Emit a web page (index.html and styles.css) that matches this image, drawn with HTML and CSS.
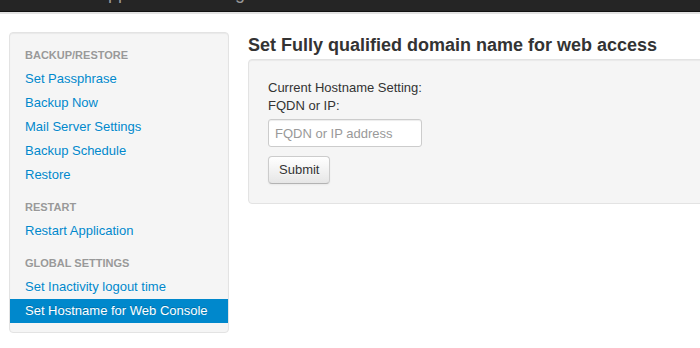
FILE: index.html
```html
<!DOCTYPE html>
<html lang="en">
<head>
<meta charset="UTF-8">
<title>Set Hostname for Web Console</title>
<link rel="stylesheet" href="styles.css">
</head>
<body>

<div class="navbar"><div class="brand">Application Settings</div></div>

<div class="page">
  <div class="sidebar">
    <ul class="nav-list">
      <li class="nav-header">Backup/Restore</li>
      <li><a href="#">Set Passphrase</a></li>
      <li><a href="#">Backup Now</a></li>
      <li><a href="#">Mail Server Settings</a></li>
      <li><a href="#">Backup Schedule</a></li>
      <li><a href="#">Restore</a></li>
      <li class="nav-header">Restart</li>
      <li><a href="#">Restart Application</a></li>
      <li class="nav-header">Global Settings</li>
      <li><a href="#">Set Inactivity logout time</a></li>
      <li class="active"><a href="#">Set Hostname for Web Console</a></li>
    </ul>
  </div>

  <div class="main">
    <h3>Set Fully qualified domain name for web access</h3>
    <div class="well">
      <form>
        <div class="label">Current Hostname Setting:</div>
        <label for="fqdn">FQDN or IP:</label>
        <input type="text" id="fqdn" placeholder="FQDN or IP address">
        <div><button type="submit" class="btn">Submit</button></div>
      </form>
    </div>
  </div>
</div>

</body>
</html>
```

FILE: styles.css
```css
html,body{margin:0;background:#fff;font-family:"Liberation Sans",Arial,sans-serif;font-size:13px;line-height:18px;color:#333;overflow:hidden}
.navbar{height:11px;background:#252525;border-bottom:1px solid #111;box-shadow:0 2px 0 #e2e2e2;overflow:hidden}
.brand{margin-top:-16px;padding-left:96px;font-size:18px;line-height:18px;color:#999;white-space:nowrap}
.page{display:flex;gap:19px;padding:20px 0 0 9px}
.sidebar{flex:0 0 218px;background:#f5f5f5;border:1px solid #e3e3e3;border-radius:4px;padding:10px 0 9px;box-shadow:inset 0 1px 1px rgba(0,0,0,.05)}
.nav-list{list-style:none;margin:0;padding:0}
.nav-list li a{display:block;padding:3px 15px;color:#0088cc;text-decoration:none;text-shadow:0 1px 0 rgba(255,255,255,.5)}
.nav-header{padding:3px 15px;font-size:11px;font-weight:bold;text-transform:uppercase;color:#999;text-shadow:0 1px 0 rgba(255,255,255,.5)}
.nav-list li + .nav-header{margin-top:8px}
.nav-list .active a{background:#0088cc;color:#fff;text-shadow:0 -1px 0 rgba(0,0,0,.2)}
.main{flex:0 0 480px}
h3{margin:0;font-size:18px;line-height:27px;font-weight:bold;color:#333}
.well{background:#f5f5f5;border:1px solid #e3e3e3;border-radius:4px;padding:19px;box-shadow:inset 0 1px 1px rgba(0,0,0,.05)}
form{margin:0}
label{display:block;margin-bottom:4px}
input{display:block;box-sizing:border-box;width:154px;height:28px;margin:0 0 9px;padding:4px 6px;font-family:inherit;font-size:13px;color:#555;background:#fff;border:1px solid #ccc;border-radius:3px;box-shadow:inset 0 1px 1px rgba(0,0,0,.075)}
input::placeholder{color:#999}
.btn{box-sizing:border-box;width:62px;height:28px;padding:4px 10px;font-family:inherit;font-size:13px;line-height:18px;color:#333;background:linear-gradient(#fff,#e6e6e6);border:1px solid #ccc;border-bottom-color:#b3b3b3;border-radius:4px;box-shadow:inset 0 1px 0 rgba(255,255,255,.2),0 1px 2px rgba(0,0,0,.05);text-shadow:0 1px 1px rgba(255,255,255,.75)}
```
